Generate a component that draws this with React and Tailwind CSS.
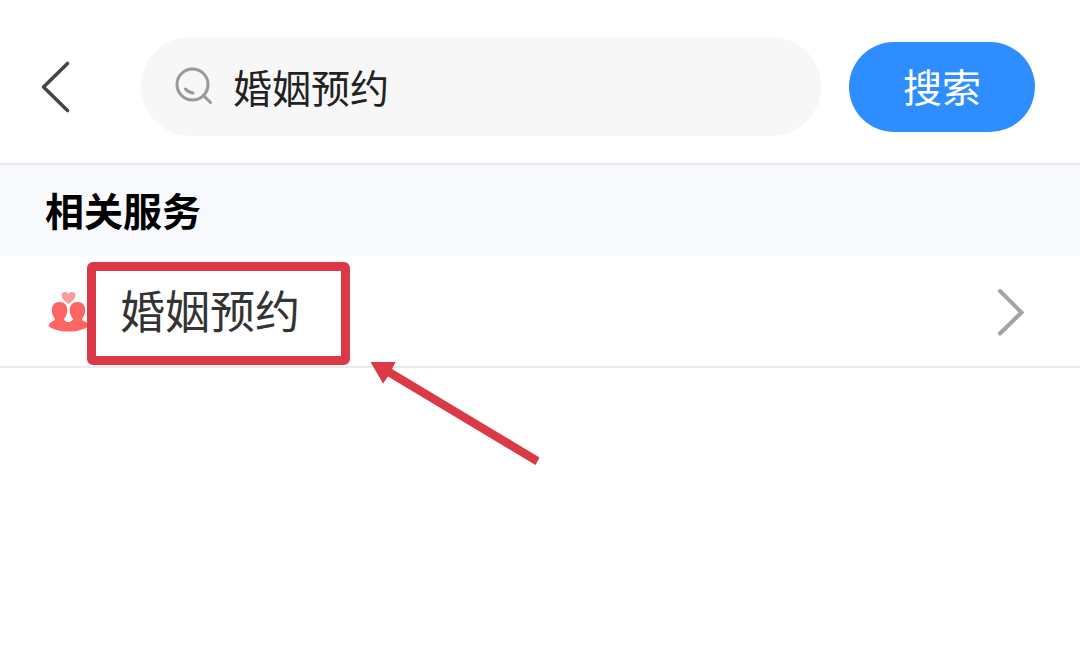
import React, { useState } from "react";

const BackIcon = () => (
  <svg width="32" height="56" viewBox="0 0 32 56" fill="none" aria-hidden="true">
    <path
      d="M27.5 4.5 L3.5 28 L27.5 51.5"
      stroke="#454545"
      strokeWidth="3.6"
      strokeLinecap="round"
      strokeLinejoin="round"
    />
  </svg>
);

const SearchIcon = () => (
  <svg width="40" height="40" viewBox="0 0 40 40" fill="none" stroke="#999999" strokeWidth="3" aria-hidden="true">
    <circle cx="17.5" cy="17.5" r="15.5" />
    <path d="M10.5 22 Q13.5 25.5 18 26" strokeLinecap="round" />
    <path d="M28.5 28.5 L35.5 35.5" strokeLinecap="round" />
  </svg>
);

const CoupleIcon = () => (
  <svg width="42" height="42" viewBox="0 0 42 42" aria-hidden="true">
    <path
      d="M20.5 14 C16.5 11 13.5 8.500 13.5 5.500 C13.5 1.500 18.800 1 20.500 4 C22.200 1 27.500 1.500 27.500 5.500 C27.500 8.500 24.500 11 20.500 14Z"
      fill="#fb9c9c"
    />
    <g fill="#fb6663">
      <path d="M11.500 12 C16.500 12 19.300 15.500 19.300 20 C19.300 23.500 18 26.500 16 29 V33 H7 V29 C5 26.500 3.800 23.500 3.800 20 C3.800 15.500 6.500 12 11.500 12Z" />
      <path d="M29.500 12 C34.500 12 37.200 15.500 37.200 20 C37.200 23.500 36 26.500 34 29 V33 H25 V29 C23 26.500 21.700 23.500 21.700 20 C21.700 15.500 24.500 12 29.500 12Z" />
      <path d="M0.500 36 C1.500 32 5 31.500 7.500 29.500 H16 C17.500 31.500 19 32 20.500 32 C22 32 23.500 31.500 25 29.500 H33.500 C36 31.500 40 32 41 36 C37 39.500 29 41.500 20.500 41.500 C12 41.500 4.500 39.500 0.500 36Z" />
    </g>
  </svg>
);

const ChevronIcon = () => (
  <svg width="32" height="52" viewBox="0 0 32 52" fill="none" aria-hidden="true">
    <path d="M5 6 L26.500 27.500 L5 48.500" stroke="#a3a3a3" strokeWidth="4" strokeLinecap="round" />
  </svg>
);

const ArrowMark = () => (
  <svg
    className="absolute left-[370px] top-[105px] pointer-events-none"
    width="172"
    height="108"
    viewBox="0 0 172 108"
    fill="#dc3947"
    aria-hidden="true"
  >
    <path d="M0.500 1 L25.500 1 L22 8 L169.500 96.500 L165.500 104 L18 15.500 L13 22.500Z" />
  </svg>
);

const SearchBar = () => {
  const [keyword, setKeyword] = useState("婚姻预约");

  return (
    <header className="flex items-center border-b-2 border-[#e6e7e9] pt-[37px] pb-[27px] pl-10 pr-[45px]">
      <button type="button" aria-label="返回" className="shrink-0">
        <BackIcon />
      </button>
      <label className="ml-[69px] flex h-[99px] min-w-0 flex-1 items-center gap-[18px] rounded-full bg-[#f7f7f7] pl-[34px] pr-8">
        <SearchIcon />
        <input
          type="text"
          aria-label="搜索服务"
          value={keyword}
          onChange={(e) => setKeyword(e.target.value)}
          className="min-w-0 flex-1 bg-transparent pb-0.5 text-[39px] leading-[58px] text-[#222222] outline-none"
        />
      </label>
      <button
        type="button"
        className="ml-7 h-[90px] w-[186px] shrink-0 rounded-full bg-[#2e8eff] pb-1 text-[39px] leading-[58px] text-white"
      >
        搜索
      </button>
    </header>
  );
};

const App = () => {
  return (
    <div className="min-h-screen bg-white font-['Noto_Sans_CJK_SC',sans-serif]">
      <SearchBar />
      <main>
        <h2 className="bg-[#f7f9fd] px-[45px] pt-[15px] pb-[17px] text-[39px] leading-[59px] font-bold text-black">
          相关服务
        </h2>
        <div className="relative border-b-2 border-[#ebebeb]">
          <a href="#service" className="flex h-[110px] items-center pl-12 pr-[53px]">
            <CoupleIcon />
            <span className="ml-[30px] flex-1 pb-[3px] text-[45px] leading-[66px] text-[#333333]">
              婚姻预约
            </span>
            <ChevronIcon />
          </a>
          {/* highlight around the service name */}
          <div className="absolute left-[87px] top-1.5 h-[103px] w-[263px] rounded-md border-[9px] border-[#dc3947] pointer-events-none" />
          <ArrowMark />
        </div>
      </main>
    </div>
  );
};

export default App;
